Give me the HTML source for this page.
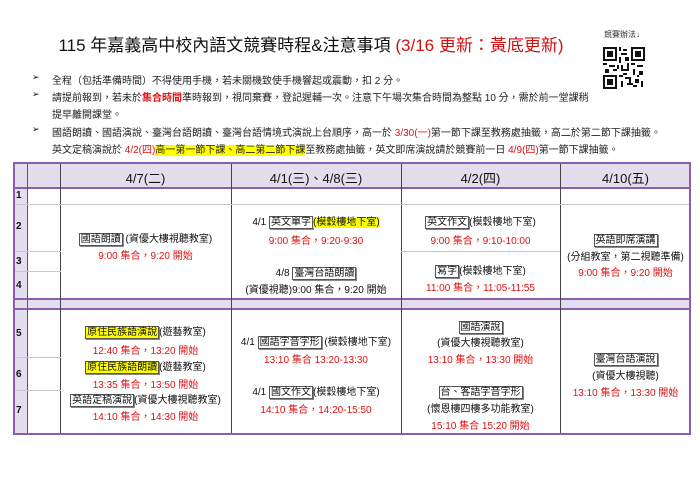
<!DOCTYPE html>
<html><head><meta charset="utf-8"><style>
*{margin:0;padding:0;box-sizing:border-box}
body{width:700px;height:495px;background:#fff;position:relative;overflow:hidden;font-family:"Liberation Sans","Noto Sans CJK TC",sans-serif;color:#111}
.a{position:absolute;white-space:nowrap}
.title{left:0;width:622px;text-align:center;top:31px;font-size:17px;color:#111}
.title span{color:#d01010}
.b{font-size:10px;color:#222;left:52px}
.bu{font-size:9px;left:32px}
.r{color:#e01010}
.y{background:#ffff00}
.bx{border:1px solid #555;padding:0 1px;box-shadow:1px 1px 0 #888}
.c{position:absolute;text-align:center;font-size:10px;white-space:nowrap}
.h{position:absolute;background:#e4dded}
.ln{position:absolute;background:#c8c8c8;height:1px}
.v{position:absolute;width:1px;background:#444}
.n{position:absolute;left:16px;font-size:10px;font-weight:bold}
</style></head><body>
<div class="a title">115 年嘉義高中校內語文競賽時程&amp;注意事項 <span>(3/16 更新：黃底更新)</span></div>
<div class="a" style="left:604px;top:29px;font-size:8px;color:#333">競賽辦法↓</div>
<svg class="a" style="left:603px;top:47px" width="42" height="42" viewBox="0 0 21 21">
<rect width="21" height="21" fill="#fff"/>
<g fill="#111">
<rect x="0" y="0" width="7" height="7"/><rect x="14" y="0" width="7" height="7"/><rect x="0" y="14" width="7" height="7"/>
</g>
<g fill="#fff"><rect x="1" y="1" width="5" height="5"/><rect x="15" y="1" width="5" height="5"/><rect x="1" y="15" width="5" height="5"/></g>
<g fill="#111"><rect x="2" y="2" width="3" height="3"/><rect x="16" y="2" width="3" height="3"/><rect x="2" y="16" width="3" height="3"/>
<rect x="8" y="0" width="1" height="2"/><rect x="10" y="1" width="2" height="1"/><rect x="9" y="3" width="3" height="1"/><rect x="8" y="5" width="1" height="3"/><rect x="11" y="5" width="2" height="2"/>
<rect x="0" y="8" width="2" height="1"/><rect x="3" y="9" width="3" height="1"/><rect x="1" y="11" width="2" height="2"/><rect x="5" y="11" width="2" height="1"/>
<rect x="9" y="9" width="1" height="3"/><rect x="10" y="11" width="3" height="1"/><rect x="12" y="8" width="1" height="4"/><rect x="14" y="8" width="2" height="1"/><rect x="17" y="9" width="3" height="1"/>
<rect x="15" y="11" width="1" height="3"/><rect x="18" y="12" width="2" height="2"/><rect x="8" y="14" width="2" height="1"/><rect x="11" y="15" width="3" height="1"/>
<rect x="9" y="17" width="1" height="3"/><rect x="12" y="18" width="3" height="1"/><rect x="16" y="16" width="2" height="2"/><rect x="19" y="17" width="1" height="3"/><rect x="15" y="19" width="2" height="1"/>
<rect x="7" y="9" width="1" height="2"/><rect x="10" y="13" width="2" height="1"/><rect x="17" y="14" width="1" height="1"/><rect x="13" y="16" width="1" height="2"/>
</g></svg>

<div class="a bu" style="top:72px">➢</div><div class="a b" style="top:72px">全程（包括準備時間）不得使用手機，若未關機致使手機響起或震動，扣 2 分。</div>
<div class="a bu" style="top:89px">➢</div><div class="a b" style="top:89px">請提前報到，若未於<b class="r">集合時間</b>準時報到，視同棄賽，登記遲輔一次。注意下午場次集合時間為整點 10 分，需於前一堂課稍</div>
<div class="a b" style="top:106px">提早離開課堂。</div>
<div class="a bu" style="top:124px">➢</div><div class="a b" style="top:124px">國語朗讀、國語演說、臺灣台語朗讀、臺灣台語情境式演說上台順序，高一於 <span class="r">3/30(一)</span>第一節下課至教務處抽籤，高二於第二節下課抽籤。</div>
<div class="a b" style="top:141px">英文定稿演說於 <span class="r">4/2(四)</span><span class="y">高一第一節下課、高二第二節下課</span>至教務處抽籤，英文即席演說請於競賽前一日 <span class="r">4/9(四)</span>第一節下課抽籤。</div>

<div style="position:absolute;left:13px;top:162px;width:678px;height:273px;border:2px solid #8a5db0"></div>
<div class="h" style="left:15px;top:164px;width:674px;height:23px"></div>
<div class="h" style="left:15px;top:164px;width:12px;height:269px"></div>
<div class="h" style="left:15px;top:299px;width:674px;height:10px"></div>
<div class="a" style="left:15px;top:187px;width:674px;height:2px;background:#8a5db0"></div>
<div class="a" style="left:15px;top:298px;width:674px;height:2px;background:#8a5db0"></div>
<div class="a" style="left:15px;top:308px;width:674px;height:2px;background:#8a5db0"></div>
<div class="a" style="left:27px;top:164px;width:1px;height:269px;background:#6b4b8a"></div>
<div class="v" style="left:60px;top:164px;height:269px"></div>
<div class="v" style="left:231px;top:164px;height:269px"></div>
<div class="v" style="left:401px;top:164px;height:269px"></div>
<div class="v" style="left:560px;top:164px;height:269px"></div>
<div class="ln" style="left:15px;top:204px;width:674px"></div>
<div class="ln" style="left:15px;top:251px;width:46px"></div>
<div class="ln" style="left:15px;top:271px;width:46px"></div>
<div class="ln" style="left:401px;top:251px;width:159px"></div>
<div class="ln" style="left:15px;top:357px;width:46px"></div>
<div class="ln" style="left:15px;top:390px;width:46px"></div>

<div class="c" style="left:60px;width:171px;top:168px;font-size:13px">4/7(二)</div>
<div class="c" style="left:231px;width:170px;top:168px;font-size:13px">4/1(三)、4/8(三)</div>
<div class="c" style="left:401px;width:159px;top:168px;font-size:13px">4/2(四)</div>
<div class="c" style="left:560px;width:131px;top:168px;font-size:13px">4/10(五)</div>

<div class="n" style="top:190px">1</div><div class="n" style="top:221px">2</div><div class="n" style="top:256px">3</div><div class="n" style="top:280px">4</div>
<div class="n" style="top:328px">5</div><div class="n" style="top:369px">6</div><div class="n" style="top:405px">7</div>

<div class="c" style="left:60px;width:171px;top:230px"><span class="bx">國語朗讀</span> (資優大樓視聽教室)</div>
<div class="c r" style="left:60px;width:171px;top:247px">9:00 集合，9:20 開始</div>

<div class="c" style="left:231px;width:170px;top:213px">4/1 <span class="bx">英文單字</span><span class="y">(模穀樓地下室)</span></div>
<div class="c r" style="left:231px;width:170px;top:232px">9:00 集合，9:20-9:30</div>
<div class="c" style="left:231px;width:170px;top:264px">4/8 <span class="bx">臺灣台語朗讀</span></div>
<div class="c" style="left:231px;width:170px;top:281px">(資優視聽)9:00 集合，9:20 開始</div>

<div class="c" style="left:401px;width:159px;top:213px"><span class="bx">英文作文</span>(模穀樓地下室)</div>
<div class="c r" style="left:401px;width:159px;top:232px">9:00 集合，9:10-10:00</div>
<div class="c" style="left:401px;width:159px;top:262px"><span class="bx">寫字</span>(模穀樓地下室)</div>
<div class="c r" style="left:401px;width:159px;top:279px">11:00 集合，11:05-11:55</div>

<div class="c" style="left:560px;width:131px;top:231px"><span class="bx">英語即席演講</span></div>
<div class="c" style="left:560px;width:131px;top:248px">(分組教室，第二視聽準備)</div>
<div class="c r" style="left:560px;width:131px;top:264px">9:00 集合，9:20 開始</div>

<div class="c" style="left:60px;width:171px;top:323px"><span class="bx y">原住民族語演說</span>(遊藝教室)</div>
<div class="c r" style="left:60px;width:171px;top:342px">12:40 集合，13:20 開始</div>
<div class="c" style="left:60px;width:171px;top:358px"><span class="bx y">原住民族語朗讀</span>(遊藝教室)</div>
<div class="c r" style="left:60px;width:171px;top:376px">13:35 集合，13:50 開始</div>
<div class="c" style="left:60px;width:171px;top:391px"><span class="bx">英語定稿演說</span>(資優大樓視聽教室)</div>
<div class="c r" style="left:60px;width:171px;top:408px">14:10 集合，14:30 開始</div>

<div class="c" style="left:231px;width:170px;top:333px">4/1 <span class="bx">國語字音字形</span> (模穀樓地下室)</div>
<div class="c r" style="left:231px;width:170px;top:351px">13:10 集合 13:20-13:30</div>
<div class="c" style="left:231px;width:170px;top:383px">4/1 <span class="bx">國文作文</span>(模穀樓地下室)</div>
<div class="c r" style="left:231px;width:170px;top:401px">14:10 集合，14:20-15:50</div>

<div class="c" style="left:401px;width:159px;top:318px"><span class="bx">國語演說</span></div>
<div class="c" style="left:401px;width:159px;top:334px">(資優大樓視聽教室)</div>
<div class="c r" style="left:401px;width:159px;top:351px">13:10 集合，13:30 開始</div>
<div class="c" style="left:401px;width:159px;top:383px"><span class="bx">台、客語字音字形</span></div>
<div class="c" style="left:401px;width:159px;top:400px">(懷恩樓四樓多功能教室)</div>
<div class="c r" style="left:401px;width:159px;top:417px">15:10 集合 15:20 開始</div>

<div class="c" style="left:560px;width:131px;top:350px"><span class="bx">臺灣台語演說</span></div>
<div class="c" style="left:560px;width:131px;top:367px">(資優大樓視聽)</div>
<div class="c r" style="left:560px;width:131px;top:384px">13:10 集合，13:30 開始</div>
</body></html>
